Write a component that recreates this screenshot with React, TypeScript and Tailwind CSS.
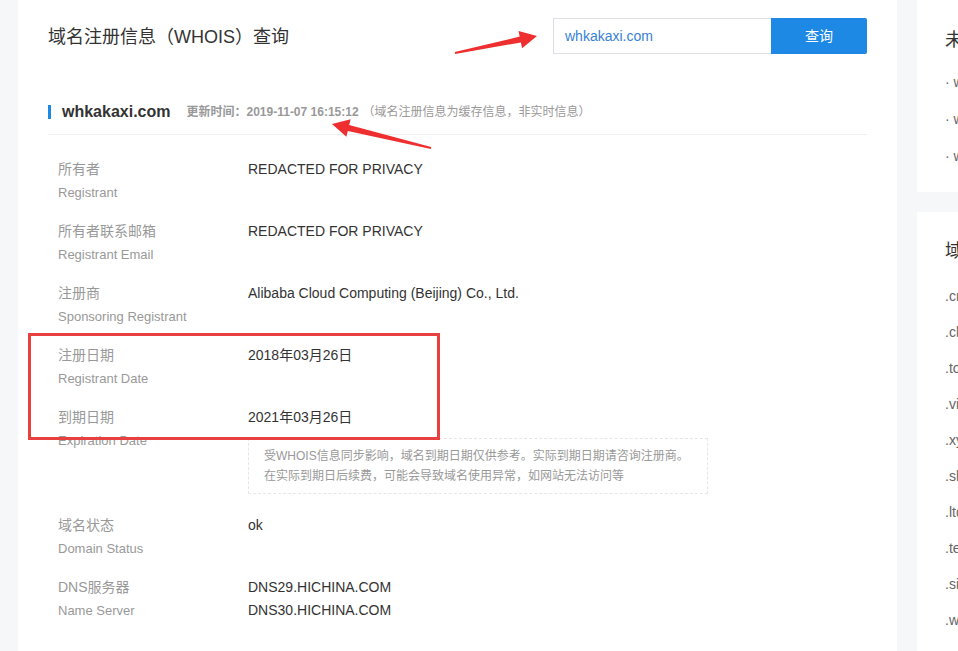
import React from "react";

type Row = {
  zh: string;
  en: string;
  values: string[];
  note?: string[];
};

const rows: Row[] = [
  { zh: "所有者", en: "Registrant", values: ["REDACTED FOR PRIVACY"] },
  { zh: "所有者联系邮箱", en: "Registrant Email", values: ["REDACTED FOR PRIVACY"] },
  { zh: "注册商", en: "Sponsoring Registrant", values: ["Alibaba Cloud Computing (Beijing) Co., Ltd."] },
  { zh: "注册日期", en: "Registrant Date", values: ["2018年03月26日"] },
  {
    zh: "到期日期",
    en: "Expiration Date",
    values: ["2021年03月26日"],
    note: [
      "受WHOIS信息同步影响，域名到期日期仅供参考。实际到期日期请咨询注册商。",
      "在实际到期日后续费，可能会导致域名使用异常，如网站无法访问等",
    ],
  },
  { zh: "域名状态", en: "Domain Status", values: ["ok"] },
  { zh: "DNS服务器", en: "Name Server", values: ["DNS29.HICHINA.COM", "DNS30.HICHINA.COM"] },
];

const related = ["whkakaxi.cn", "whkakaxi.net", "whkakaxi.top"];
const suffixes = [".cn", ".club", ".top", ".vip", ".xyz", ".shop", ".ltd", ".tech", ".site", ".wang"];

function InfoRow({ row, last }: { row: Row; last: boolean }) {
  return (
    <div className={`flex leading-[23px] ${row.note ? "mb-[20px]" : last ? "" : "mb-[16px]"}`}>
      <div className="w-[200px] shrink-0 pl-[10px]">
        <div className="text-[14px] text-[#999]">{row.zh}</div>
        <div className="text-[13px] text-[#999]">{row.en}</div>
      </div>
      <div className="flex flex-col">
        {row.values.map((v) => (
          <div key={v} className="text-[14px] text-[#333]">
            {v}
          </div>
        ))}
        {row.note && (
          <div className="mt-[9px] w-[460px] border border-dashed border-[#e6e6e6] px-[15px] py-[7px] text-[12px] leading-[20px] text-[#999]">
            {row.note.map((n) => (
              <div key={n}>{n}</div>
            ))}
          </div>
        )}
      </div>
    </div>
  );
}

export default function App() {
  return (
    <div className="relative h-[651px] w-[958px] overflow-hidden bg-[#f6f7f9] font-['Liberation_Sans','Noto_Sans_CJK_SC',sans-serif]">
      <div className="flex gap-[20px] pl-[18px]">
        {/* main whois card */}
        <div className="h-[700px] w-[879px] shrink-0 bg-white px-[30px] pt-[18px]">
          <div className="flex h-[36px] items-center justify-between">
            <h1 className="pt-[2px] text-[18px] text-[#333]">域名注册信息（WHOIS）查询</h1>
            <div className="flex h-[36px]">
              <div className="flex h-[36px] w-[218px] items-center border border-r-0 border-[#dcdfe6] pl-[11px] text-[14px] text-[#3a7fd6]">
                whkakaxi.com
              </div>
              <button className="flex h-[36px] w-[96px] items-center justify-center rounded-r-[2px] bg-[#1e88e5] text-[14px] text-white">
                查询
              </button>
            </div>
          </div>

          <div className="mt-[45px] flex items-center border-b border-[#eeeeee] pb-[10px] pt-[1px] leading-[24px]">
            <span className="mr-[11px] h-[14px] w-[3px] bg-[#1e88e5]" />
            <span className="text-[16px] font-bold text-[#333]">whkakaxi.com</span>
            <span className="ml-[16px] text-[12px] font-bold text-[#999]">更新时间：2019-11-07 16:15:12</span>
            <span className="ml-[4px] text-[12px] text-[#999]">（域名注册信息为缓存信息，非实时信息）</span>
          </div>

          <div className="pt-[23px]">
            {rows.map((r, i) => (
              <InfoRow key={r.en} row={r} last={i === rows.length - 1} />
            ))}
          </div>
        </div>

        {/* sidebar */}
        <div className="flex w-[300px] shrink-0 flex-col gap-[20px]">
          <div className="h-[192px] bg-white px-[28px] pt-[27px]">
            <div className="text-[18px] leading-[26px] text-[#333]">未注册的相关域名</div>
            <div className="mt-[19px] flex flex-col gap-[17px]">
              {related.map((d) => (
                <div key={d} className="text-[14px] leading-[20px] text-[#666]">
                  · {d}
                </div>
              ))}
            </div>
          </div>
          <div className="h-[460px] bg-white px-[28px] pt-[26px]">
            <div className="text-[18px] leading-[26px] text-[#333]">域名后缀</div>
            <div className="mt-[22px] flex flex-col gap-[16px]">
              {suffixes.map((s) => (
                <div key={s} className="text-[14px] leading-[20px] text-[#666]">
                  {s}
                </div>
              ))}
            </div>
          </div>
        </div>
      </div>

      {/* red annotations */}
      <div className="pointer-events-none absolute left-[28px] top-[333px] h-[107px] w-[412px] border-[3px] border-[#e8403f]" />
      <svg className="pointer-events-none absolute left-0 top-0" width="958" height="651" viewBox="0 0 958 651">
        <polygon
          fill="#ef2f2f"
          points="537,36 518.5,31 519.7,36.6 454.8,52 455.2,54 520.9,42.4 522.1,48.3"
        />
        <polygon
          fill="#ef2f2f"
          points="332,124 350.6,119.3 349.2,125.1 431.2,147 430.8,149 347.8,130.9 346.4,136.7"
        />
      </svg>
    </div>
  );
}
